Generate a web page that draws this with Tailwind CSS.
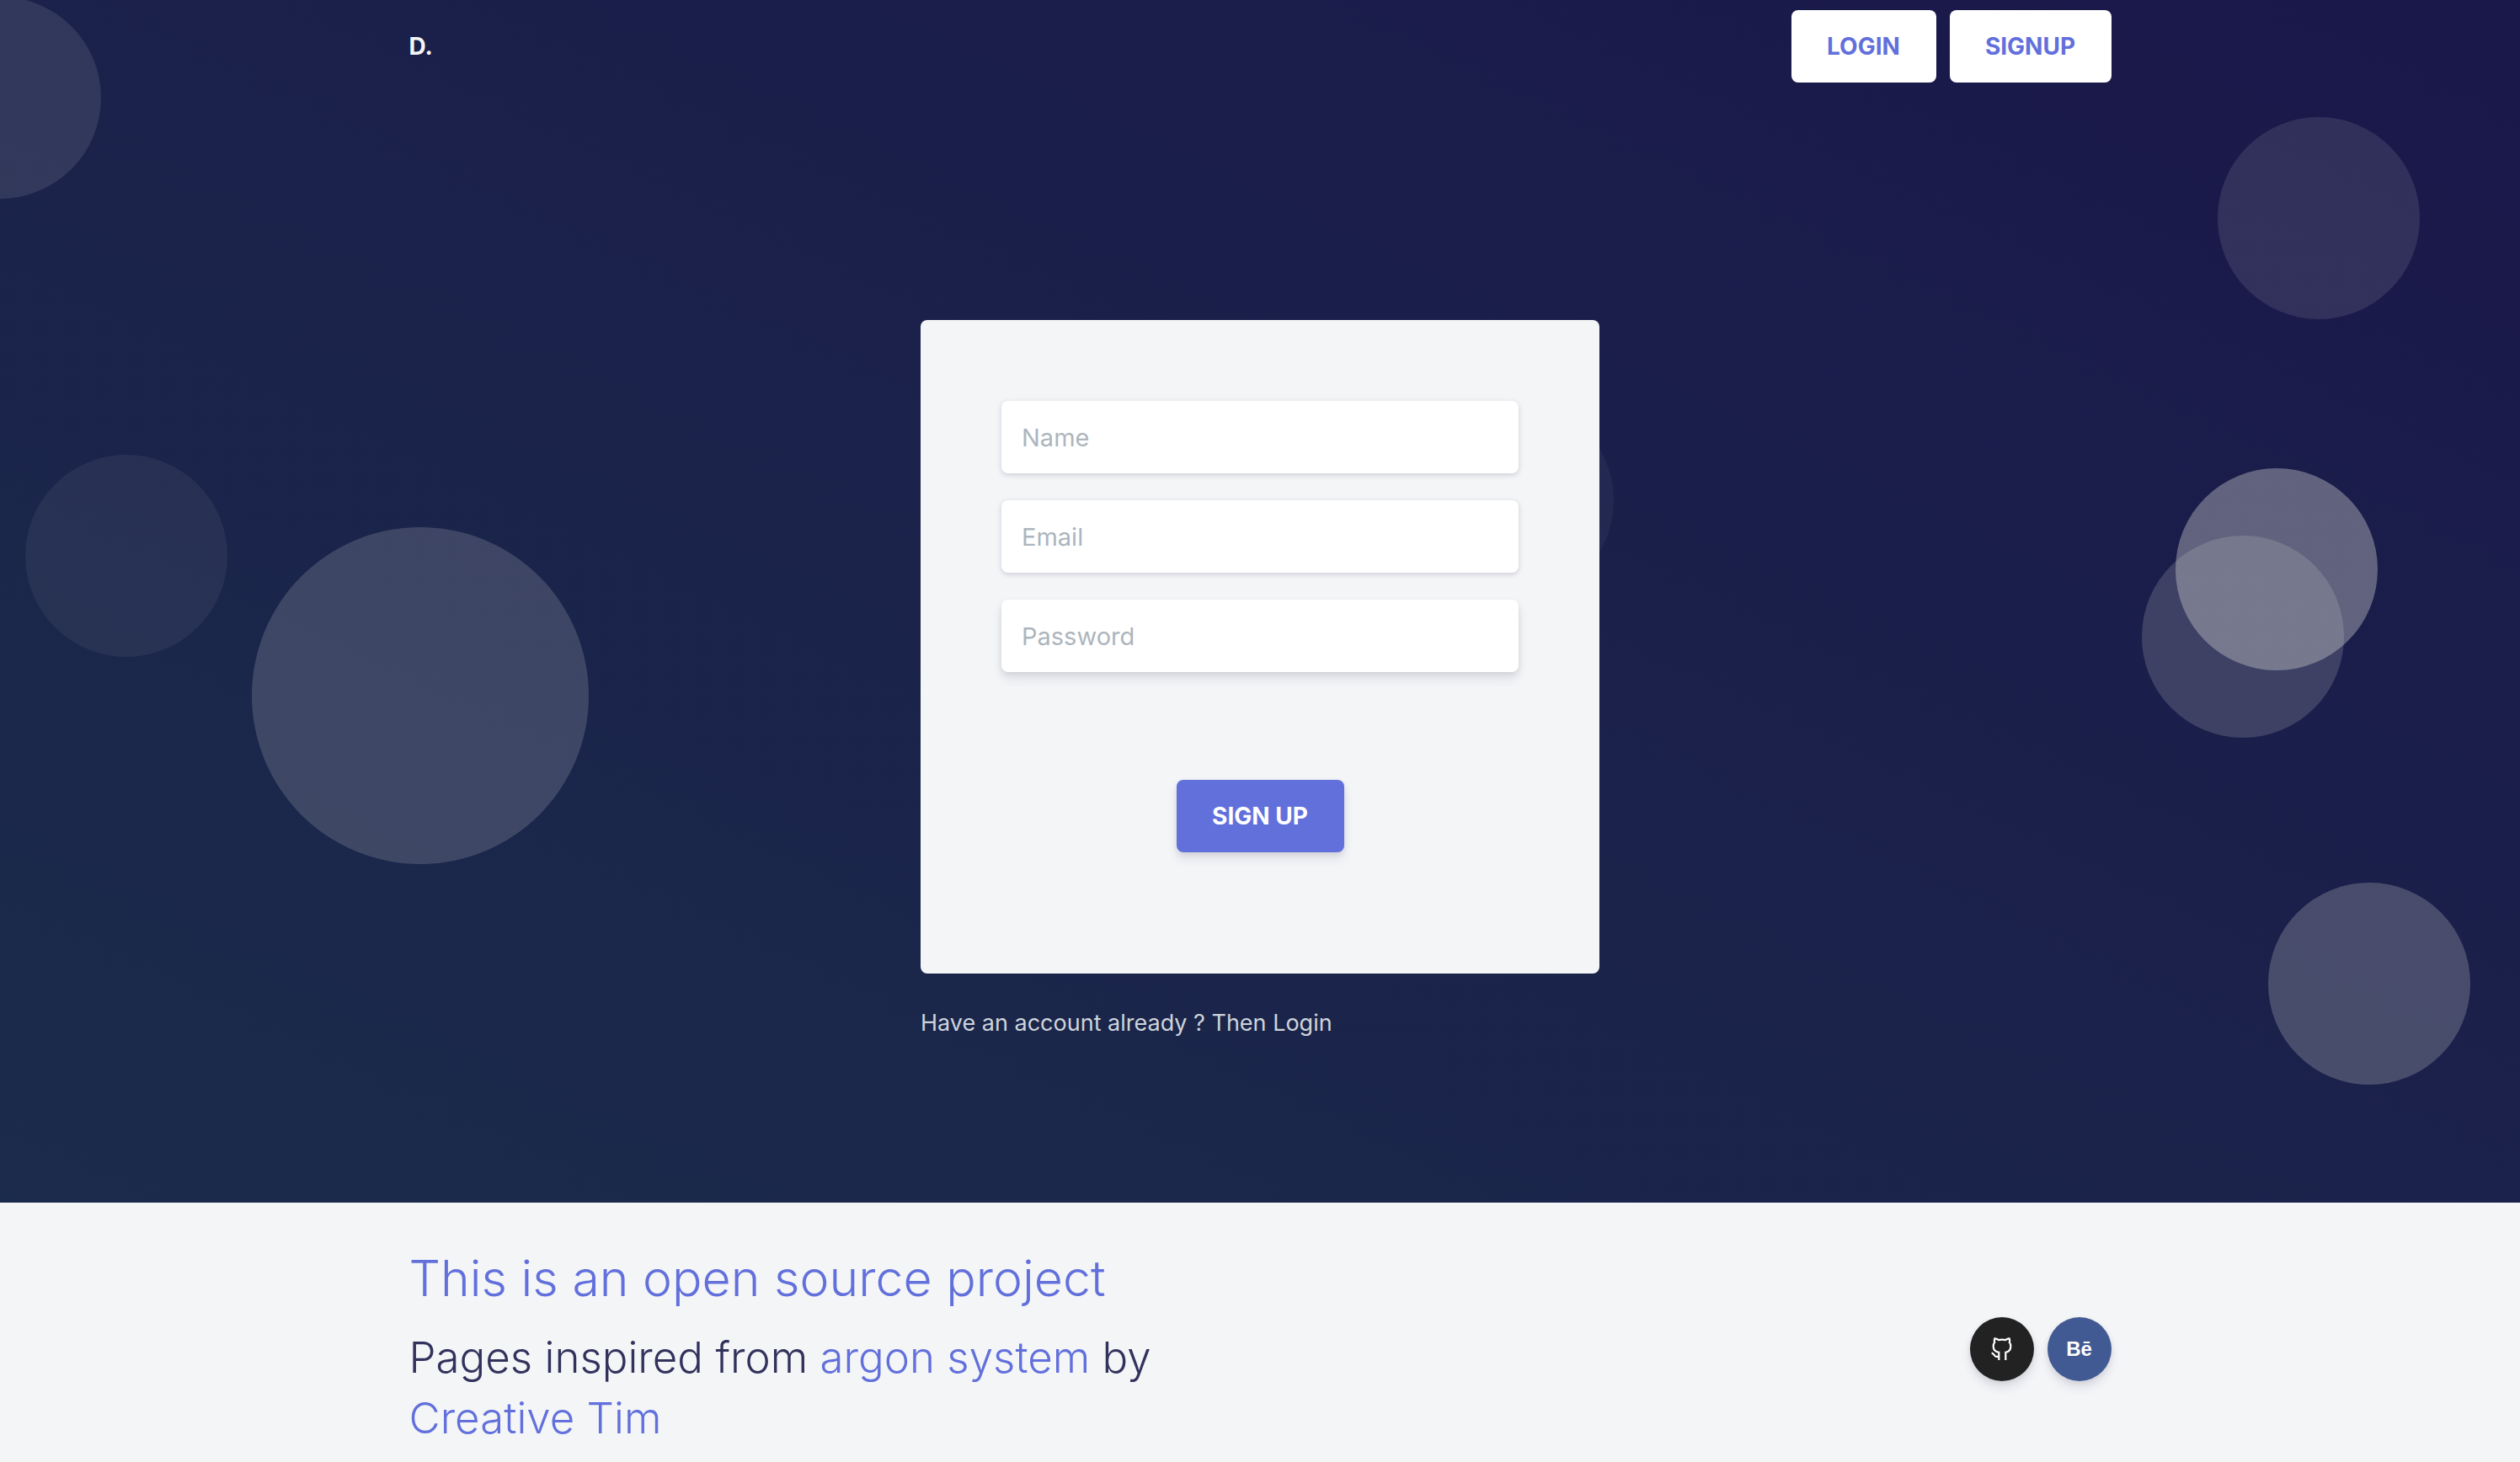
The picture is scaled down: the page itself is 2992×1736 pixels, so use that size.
<!DOCTYPE html>
<html lang="en">
<head>
<meta charset="utf-8">
<meta name="viewport" content="width=device-width, initial-scale=1">
<title>Sign up</title>
<script src="https://cdn.jsdelivr.net/npm/@tailwindcss/browser@4"></script>
</head>
<body class="bg-[#f4f5f7] font-[Inter,sans-serif] text-[#32325d] overflow-x-hidden">
<div class="relative overflow-hidden bg-linear-to-bl from-[#1a174a] to-[#1b2b4b] pb-[194px]">
  <!-- Floating background circles -->
  <div class="absolute inset-0" aria-hidden="true">
    <span class="absolute -left-[120px] -top-1 size-60 rounded-full bg-[#cecece]/13"></span>
    <span class="absolute left-[1%] top-[540px] size-60 rounded-full bg-[#cecece]/7"></span>
    <span class="absolute left-[10%] top-[626px] size-100 rounded-full bg-[#cecece]/20"></span>
    <span class="absolute left-[56%] top-[474px] size-60 rounded-full bg-[#cecece]/5"></span>
    <span class="absolute left-[88%] top-[139px] size-60 rounded-full bg-[#cecece]/13"></span>
    <span class="absolute left-[85%] top-[636px] size-60 rounded-full bg-[#cecece]/20"></span>
    <span class="absolute left-[calc(85%+40px)] top-[556px] size-60 rounded-full bg-[#cecece]/40"></span>
    <span class="absolute left-[90%] top-[1048px] size-60 rounded-full bg-[#cecece]/26"></span>
  </div>

  <header class="relative mx-auto flex max-w-[2021px] items-center justify-between py-3">
    <a href="#" class="text-[28px] font-bold text-[#f4f5f7]">D.</a>
    <nav class="flex gap-4">
      <button type="button" class="h-[86px] min-w-[172px] rounded-lg bg-white px-8 text-[28px] font-bold text-[#6270dc]">LOGIN</button>
      <button type="button" class="h-[86px] min-w-[192px] rounded-lg bg-white px-8 text-[28px] font-bold text-[#6270dc]">SIGNUP</button>
    </nav>
  </header>

  <main class="relative mx-auto mt-[270px] max-w-[806px]">
    <form class="rounded-lg bg-[#f4f5f7] px-24 pt-24 pb-36">
      <div class="flex flex-col gap-8">
        <input type="text" aria-label="Name" placeholder="Name" class="h-[86px] w-full rounded-lg bg-white px-6 text-[29px] placeholder:text-[#adb5bd] shadow-[0_2px_6px_rgba(50,50,93,.2)]">
        <input type="email" aria-label="Email" placeholder="Email" class="h-[86px] w-full rounded-lg bg-white px-6 text-[29px] placeholder:text-[#adb5bd] shadow-[0_2px_6px_rgba(50,50,93,.2)]">
        <input type="password" aria-label="Password" placeholder="Password" class="h-[86px] w-full rounded-lg bg-white px-6 text-[29px] placeholder:text-[#adb5bd] shadow-[0_8px_12px_rgba(50,50,93,.11),0_2px_6px_rgba(0,0,0,.08)]">
      </div>
      <div class="mt-32 flex justify-center">
        <button type="submit" class="h-[86px] min-w-[199px] rounded-lg bg-[#6270dc] px-8 text-[28px] font-bold text-white shadow-[0_8px_12px_rgba(50,50,93,.11),0_2px_6px_rgba(0,0,0,.08)]">SIGN UP</button>
      </div>
    </form>
    <a href="#" class="mt-10 block text-[27px] leading-[38px] text-[#ced4da]">Have an account already ? Then Login</a>
  </main>
</div>

<footer class="mx-auto flex max-w-[2021px] items-center justify-between pt-14">
  <div class="max-w-[980px]">
    <h3 class="text-[59px] leading-[68px] font-light text-[#6270dc]">This is an open source project</h3>
    <h4 class="mt-6 text-[51px] leading-[72px] font-light">Pages inspired from <a href="#" class="text-[#6270dc]">argon system</a> by<br><a href="#" class="text-[#6270dc]">Creative Tim</a></h4>
  </div>
  <div class="flex gap-4">
    <button type="button" aria-label="GitHub" class="flex size-[76px] items-center justify-center rounded-full bg-[#222] text-white shadow-[0_8px_12px_rgba(50,50,93,.11),0_2px_6px_rgba(0,0,0,.08)]">
      <svg class="h-7 w-[26px]" viewBox="0 0 26 28" fill="none" stroke="currentColor" stroke-width="2.2"><path d="M9.300 27V17.800C4.800 17.300 2.700 14.500 2.700 10.500c0-2 .5-3.400 1.500-4.600C3.700 4.300 3.800 2.600 4.300 1.300c1.700.1 3.200.8 4.700 1.800 2.600-.5 5.400-.5 8 0 1.500-1 3-1.700 4.700-1.800.5 1.300.6 3 .1 4.600 1 1.200 1.500 2.600 1.500 4.600 0 4-2.100 6.800-6 7.300V27M.6 18.600c3.200.3 3 4.300 6 4.300h2.700"/></svg>
    </button>
    <button type="button" aria-label="Behance" class="flex size-[76px] items-center justify-center rounded-full bg-[#425a94] font-['Liberation_Sans',sans-serif] text-[24px] font-bold text-white shadow-[0_8px_12px_rgba(50,50,93,.11),0_2px_6px_rgba(0,0,0,.08)]">Bē</button>
  </div>
</footer>
</body>
</html>
